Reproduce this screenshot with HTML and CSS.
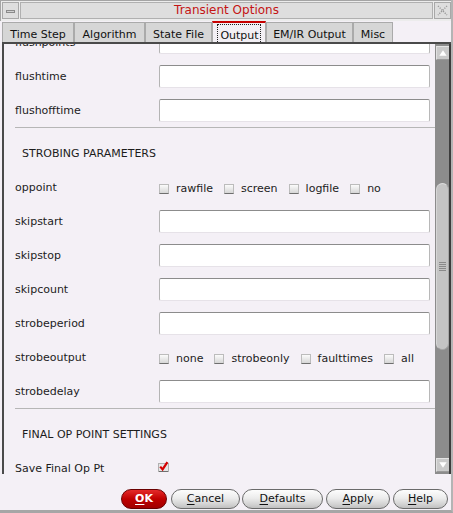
FILE: index.html
```html
<!DOCTYPE html>
<html>
<head>
<meta charset="utf-8">
<title>Transient Options</title>
<link rel="stylesheet" href="styles.css">
</head>
<body>
<div class="window">
  <div class="titlebar">
    <div class="tb-btn"><span class="dash"></span></div>
    <div class="title">Transient Options</div>
    <div class="tb-btn">
      <svg width="15" height="15" viewBox="0 0 15 15"><path d="M3 3 L12 12 M12 3 L3 12" stroke="#9a9a9a" stroke-width="1.4" stroke-dasharray="1.2 1.2" fill="none"/></svg>
    </div>
  </div>
  <div class="tabs">
    <div class="tab t1">Time Step</div>
    <div class="tab t2">Algorithm</div>
    <div class="tab t3">State File</div>
    <div class="tab t4 active"><span class="focus">Output</span></div>
    <div class="tab t5">EM/IR Output</div>
    <div class="tab t6">Misc</div>
  </div>
  <div class="body">
    <div class="panel">
      <div class="content">
        <div class="row"><span class="label">flushpoints</span><span class="field"></span></div>
        <div class="row"><span class="label">flushtime</span><span class="field"></span></div>
        <div class="row"><span class="label">flushofftime</span><span class="field"></span></div>
        <div class="sep"></div>
        <div class="heading">STROBING PARAMETERS</div>
        <div class="row">
          <span class="label">oppoint</span>
          <div class="checks">
            <span class="cb"><span class="box"></span>rawfile</span>
            <span class="cb"><span class="box"></span>screen</span>
            <span class="cb"><span class="box"></span>logfile</span>
            <span class="cb"><span class="box"></span>no</span>
          </div>
        </div>
        <div class="row"><span class="label">skipstart</span><span class="field"></span></div>
        <div class="row"><span class="label">skipstop</span><span class="field"></span></div>
        <div class="row"><span class="label">skipcount</span><span class="field"></span></div>
        <div class="row"><span class="label">strobeperiod</span><span class="field"></span></div>
        <div class="row">
          <span class="label">strobeoutput</span>
          <div class="checks">
            <span class="cb"><span class="box"></span>none</span>
            <span class="cb"><span class="box"></span>strobeonly</span>
            <span class="cb"><span class="box"></span>faulttimes</span>
            <span class="cb"><span class="box"></span>all</span>
          </div>
        </div>
        <div class="row"><span class="label">strobedelay</span><span class="field"></span></div>
        <div class="sep"></div>
        <div class="heading">FINAL OP POINT SETTINGS</div>
        <div class="row">
          <span class="label">Save Final Op Pt</span>
          <svg class="checked" width="11" height="11" viewBox="0 0 11 11">
            <rect x="0.5" y="2.5" width="10" height="8" fill="#e6e6e6" stroke="#b0b0b0"/>
            <line x1="1" y1="10.5" x2="10" y2="10.5" stroke="#707070"/>
            <path d="M2.2 5.6 L4.6 8.4 L9.4 1.2" stroke="#d40000" stroke-width="2.2" fill="none"/>
          </svg>
        </div>
      </div>
    </div>
    <div class="scrollbar">
      <div class="sb-btn">
        <svg width="13" height="14" viewBox="0 0 13 14"><path d="M2.5 10 L6.5 4 L10.5 10 Z" fill="#ffffff"/></svg>
      </div>
      <div class="thumb">
        <div class="grip"><i></i><i></i><i></i><i></i><i></i></div>
      </div>
      <div class="sb-space"></div>
      <div class="sb-btn">
        <svg width="13" height="14" viewBox="0 0 13 14"><path d="M2.5 4 L6.5 10 L10.5 4 Z" fill="#ffffff"/></svg>
      </div>
    </div>
  </div>
  <div class="btnrow">
    <div class="btn ok"><u>O</u>K</div>
    <div class="btn cancel"><u>C</u>ancel</div>
    <div class="btn defaults"><u>D</u>efaults</div>
    <div class="btn apply"><u>A</u>pply</div>
    <div class="btn help"><u>H</u>elp</div>
  </div>
</div>
</body>
</html>
```
FILE: styles.css
```css
* { box-sizing: border-box; }
html, body { margin: 0; padding: 0; }
body {
  width: 453px;
  height: 513px;
  overflow: hidden;
  background: #f4f0f6;
  font-family: "DejaVu Sans", sans-serif;
  font-size: 11px;
  color: #1c1c1c;
}
.window {
  width: 453px;
  height: 513px;
  display: flex;
  flex-direction: column;
  border-right: 2px solid #b4b4b4;
  border-bottom: 3px solid #a6a6a6;
}

/* title bar */
.titlebar {
  display: flex;
  height: 21px;
  flex: none;
  gap: 1px;
  padding: 1px 0 0 1px;
  border-top: 1px solid #a4a4a4;
  border-left: 1px solid #a4a4a4;
  background: #ececec;
}
.tb-btn {
  width: 17px;
  height: 17px;
  flex: none;
  display: flex;
  align-items: center;
  justify-content: center;
  background: #dedede;
  border: 1px solid #a8a8a8;
}
.dash {
  width: 9px;
  height: 3px;
  background: #d0d0d0;
  border: 1px solid #8a8a8a;
  margin-top: 2px;
}
.title {
  flex: 1;
  height: 17px;
  background: #dedede;
  border: 1px solid #b0b0b0;
  color: #c41414;
  font-size: 12px;
  line-height: 15px;
  text-align: center;
}

/* tabs */
.tabs {
  display: flex;
  align-items: flex-end;
  height: 21px;
  flex: none;
  padding-left: 2px;
}
.tab {
  height: 20px;
  padding-top: 5px;
  line-height: 14px;
  text-align: center;
  background: #d6d6d6;
  border: 1px solid #aaaaaa;
  border-bottom: none;
  color: #111;
}
.t1 { width: 72px; }
.t2 { width: 71px; }
.t3 { width: 67px; }
.t4 { width: 54px; }
.t5 { width: 87px; }
.t6 { width: 40px; }
.tab.active {
  height: 21px;
  padding-top: 2px;
  background: #f2eff4;
  border-top: 2px solid #c80000;
}
.focus {
  display: inline-block;
  outline: 1px dotted #222;
  padding: 3px 1px 0 2px;
  line-height: 15px;
}

/* body */
.body {
  display: flex;
  height: 432px;
  flex: none;
  margin-left: 2px;
  border-top: 2px solid #4a4a4a;
  border-left: 2px solid #4a4a4a;
}
.panel {
  width: 431px;
  flex: none;
  overflow: hidden;
  background: #f4f0f6;
}
.content {
  margin-top: -19px;
  padding: 0 5px 0 11px;
}
.row {
  display: flex;
  align-items: center;
  height: 34px;
}
.label {
  width: 144px;
  flex: none;
}
.field {
  flex: 1;
  height: 23px;
  background: #ffffff;
  border: 1px solid;
  border-color: #8c8c8c #b8b8b8 #e6e2e8 #b4b4b4;
  border-radius: 2px;
}
.sep {
  height: 1px;
  background: #b6b6b6;
  margin-right: -5px;
}
.heading {
  padding: 19px 0 9px 7px;
  line-height: 14px;
  height: 42px;
}
.checks {
  display: flex;
  align-items: center;
  padding-top: 3px;
}
.cb {
  display: flex;
  align-items: center;
  margin-right: 11px;
}
.box {
  width: 10px;
  height: 10px;
  margin-right: 7px;
  background: linear-gradient(#fbfbfb, #d6d6d6);
  border: 1px solid #bcbcbc;
  border-bottom-color: #6e6e6e;
}
.checked { margin-left: -1px; margin-top: -3px; }

/* scrollbar */
.scrollbar {
  width: 16px;
  flex: none;
  display: flex;
  flex-direction: column;
  padding: 2px 0 2px 1px;
  background: #8c8c8c;
  border-right: 2px solid #3c3c3c;
}
.sb-btn {
  width: 13px;
  height: 14px;
  flex: none;
  background: #cacaca;
  border-top: 1px solid #e4e4e4;
  border-left: 1px solid #e0e0e0;
  border-bottom: 1px solid #9a9a9a;
  display: flex;
  align-items: center;
  justify-content: center;
}
.thumb {
  margin-top: 123px;
  width: 13px;
  height: 167px;
  flex: none;
  background: #c4c4c4;
  border: 1px solid #a6a6a6;
  border-top-color: #dcdcdc;
  border-left-color: #d6d6d6;
  border-radius: 7px;
  display: flex;
  align-items: center;
  justify-content: center;
}
.grip {
  display: flex;
  flex-direction: column;
  gap: 1px;
}
.grip i {
  display: block;
  width: 7px;
  height: 1px;
  background: #8a8a8a;
}
.sb-space { flex: 1; }

/* buttons */
.btnrow {
  height: 36px;
  flex: none;
  display: flex;
  justify-content: flex-end;
  align-items: flex-start;
  padding: 15px 3px 0 0;
}
.btn {
  height: 20px;
  line-height: 18px;
  text-align: center;
  border-radius: 10px;
  border: 1px solid #6a6a6a;
  background: linear-gradient(#fdfdfd, #ececec 45%, #d2d2d2 80%, #c0c0c0);
  color: #111;
  margin-left: 3px;
}
.btn u { text-decoration: underline; text-underline-offset: 2px; }
.ok {
  width: 46px;
  margin-left: 0;
  background: linear-gradient(#e42a2a, #c00000 50%, #a00000);
  border-color: #6a0000;
  color: #ffffff;
  font-weight: bold;
  margin-right: 1px;
}
.cancel { width: 69px; }
.defaults { width: 81px; margin-left: 2px; }
.apply { width: 64px; }
.help { width: 55px; }
```
